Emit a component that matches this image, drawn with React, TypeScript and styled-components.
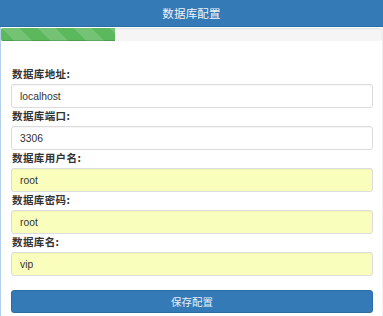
import React from "react";
import styled, { createGlobalStyle } from "styled-components";

const GlobalStyle = createGlobalStyle`
  html, body {
    margin: 0;
    padding: 0;
    background: #fff;
  }
  body {
    font-family: "Liberation Sans", "Noto Sans CJK SC", Arial, sans-serif;
    color: #333;
  }
`;

const fields = [
  { label: "数据库地址:", value: "localhost", filled: false },
  { label: "数据库端口:", value: "3306", filled: false },
  { label: "数据库用户名:", value: "root", filled: true },
  { label: "数据库密码:", value: "root", filled: true },
  { label: "数据库名:", value: "vip", filled: true },
];

export default function App() {
  return (
    <>
      <GlobalStyle />
      <Panel>
        <Header>数据库配置</Header>
        <Body>
          <Progress>
            <ProgressBar style={{ width: "114px" }} />
          </Progress>
          <Form onSubmit={(e) => e.preventDefault()}>
            {fields.map((f) => (
              <Group key={f.label}>
                <Label>{f.label}</Label>
                <Input defaultValue={f.value} $filled={f.filled} />
              </Group>
            ))}
            <SaveButton type="submit">保存配置</SaveButton>
          </Form>
        </Body>
      </Panel>
    </>
  );
}

const Panel = styled.div`
  width: 383px;
  height: 316px;
  display: flex;
  flex-direction: column;
  overflow: hidden;
`;

const Header = styled.div`
  height: 26px;
  background: #337ab7;
  border-bottom: 1px solid #2e6da4;
  color: #eef4fa;
  font-size: 11.5px;
  letter-spacing: 0.2px;
  font-family: "Noto Sans CJK SC", sans-serif;
  display: flex;
  align-items: center;
  justify-content: center;
`;

const Body = styled.div`
  flex: 1;
  border-left: 1px solid #b4cfe9;
  border-right: 1px solid #f0f0f0;
  padding-top: 1px;
`;

const Progress = styled.div`
  height: 13px;
  background: #f5f5f5;
  box-shadow: inset 0 1px 2px rgba(0, 0, 0, 0.08);
  border-radius: 2px;
  overflow: hidden;
`;

const ProgressBar = styled.div`
  height: 100%;
  background-color: #5cb85c;
  background-image: linear-gradient(
    45deg,
    rgba(255, 255, 255, 0.15) 25%,
    transparent 25%,
    transparent 50%,
    rgba(255, 255, 255, 0.15) 50%,
    rgba(255, 255, 255, 0.15) 75%,
    transparent 75%,
    transparent
  );
  background-size: 36px 36px;
  box-shadow: inset 0 -1px 0 rgba(0, 0, 0, 0.15);
`;

const Form = styled.form`
  display: flex;
  flex-direction: column;
  padding: 25px 9px 0 10px;
`;

const Group = styled.div`
  display: flex;
  flex-direction: column;
`;

const Label = styled.label`
  height: 18px;
  line-height: 16px;
  font-size: 10.5px;
  font-weight: bold;
  letter-spacing: 0.4px;
  color: #333;
  font-family: "Noto Sans CJK SC", sans-serif;
  padding-left: 1px;
`;

const Input = styled.input<{ $filled: boolean }>`
  box-sizing: border-box;
  width: 100%;
  height: 24px;
  margin: 0;
  padding: 0 8px;
  border: 1px solid #dcdcdc;
  border-radius: 3px;
  background: ${(p) => (p.$filled ? "#fafebd" : "#fff")};
  box-shadow: inset 0 1px 1px rgba(0, 0, 0, 0.04);
  font-family: "Liberation Sans", Arial, sans-serif;
  font-size: 10.3px;
  color: #333;
  outline: none;
`;

const SaveButton = styled.button`
  margin-top: 14px;
  height: 23px;
  width: 100%;
  border: 1px solid #2e6da4;
  border-radius: 3px;
  background: #337ab7;
  color: #e8f0f8;
  font-size: 10.5px;
  font-family: "Noto Sans CJK SC", sans-serif;
  cursor: pointer;
  padding: 0;
`;
